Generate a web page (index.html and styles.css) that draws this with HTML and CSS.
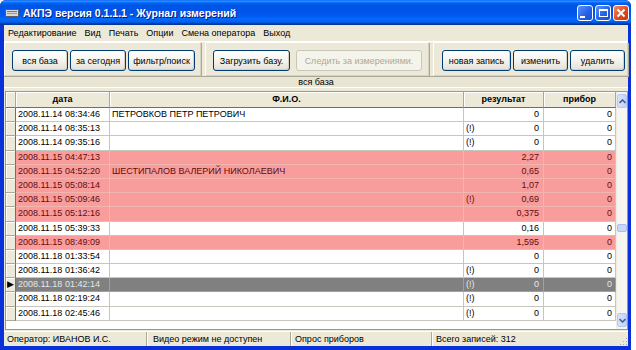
FILE: index.html
```html
<!DOCTYPE html>
<html lang="ru">
<head>
  <meta charset="UTF-8" />
  <title>АКПЭ версия 0.1.1.1 - Журнал измерений</title>
  <link rel="stylesheet" href="styles.css">
</head>
<body>
  <div class="window">
    <div class="titlebar">
      <svg class="app-icon" width="14" height="8" viewBox="0 0 14 8">
        <rect x="0.5" y="0.5" width="13" height="7" rx="1" fill="#d8d8d8" stroke="#5a5a5a"/>
        <rect x="2" y="2" width="10" height="1" fill="#777"/>
        <rect x="2" y="4" width="10" height="1" fill="#999"/>
      </svg>
      <span class="title">АКПЭ версия 0.1.1.1 - Журнал измерений</span>
      <div class="title-btns">
        <div class="tbtn"><span class="min-glyph"></span></div>
        <div class="tbtn"><span class="max-glyph"></span></div>
        <div class="tbtn close">
          <svg width="10" height="10" viewBox="0 0 10 10"><path d="M1.5 1.5 L8.5 8.5 M8.5 1.5 L1.5 8.5" stroke="#fff" stroke-width="2"/></svg>
        </div>
      </div>
    </div>

    <div class="client">
      <div class="menubar">
        <span>Редактирование</span>
        <span>Вид</span>
        <span>Печать</span>
        <span>Опции</span>
        <span>Смена оператора</span>
        <span>Выход</span>
      </div>

      <div class="toolbar">
        <div class="panel p1">
          <button class="btn w56">вся база</button>
          <button class="btn w56">за сегодня</button>
          <button class="btn w67">фильтр/поиск</button>
        </div>
        <div class="panel p2">
          <button class="btn w77">Загрузить базу.</button>
          <button class="btn w126" disabled>Следить за измерениями.</button>
        </div>
        <div class="panel p3">
          <button class="btn w69">новая запись</button>
          <button class="btn w55">изменить</button>
          <button class="btn w55">удалить</button>
        </div>
      </div>

      <div class="strip">вся база</div>

      <div class="grid">
        <div class="grid-body">
          <div class="row head">
            <div class="c ind"></div>
            <div class="c">дата</div>
            <div class="c">Ф.И.О.</div>
            <div class="c">результат</div>
            <div class="c">прибор</div>
          </div>
          <div class="row">
            <div class="c ind"></div>
            <div class="c">2008.11.14 08:34:46</div>
            <div class="c">ПЕТРОВКОВ ПЕТР ПЕТРОВИЧ</div>
            <div class="c res"><span></span><span>0</span></div>
            <div class="c num">0</div>
          </div>
          <div class="row">
            <div class="c ind"></div>
            <div class="c">2008.11.14 08:35:13</div>
            <div class="c"></div>
            <div class="c res"><span>(!)</span><span>0</span></div>
            <div class="c num">0</div>
          </div>
          <div class="row">
            <div class="c ind"></div>
            <div class="c">2008.11.14 09:35:16</div>
            <div class="c"></div>
            <div class="c res"><span>(!)</span><span>0</span></div>
            <div class="c num">0</div>
          </div>
          <div class="row alarm">
            <div class="c ind"></div>
            <div class="c">2008.11.15 04:47:13</div>
            <div class="c"></div>
            <div class="c res"><span></span><span>2,27</span></div>
            <div class="c num">0</div>
          </div>
          <div class="row alarm">
            <div class="c ind"></div>
            <div class="c">2008.11.15 04:52:20</div>
            <div class="c">ШЕСТИПАЛОВ ВАЛЕРИЙ НИКОЛАЕВИЧ</div>
            <div class="c res"><span></span><span>0,65</span></div>
            <div class="c num">0</div>
          </div>
          <div class="row alarm">
            <div class="c ind"></div>
            <div class="c">2008.11.15 05:08:14</div>
            <div class="c"></div>
            <div class="c res"><span></span><span>1,07</span></div>
            <div class="c num">0</div>
          </div>
          <div class="row alarm">
            <div class="c ind"></div>
            <div class="c">2008.11.15 05:09:46</div>
            <div class="c"></div>
            <div class="c res"><span>(!)</span><span>0,69</span></div>
            <div class="c num">0</div>
          </div>
          <div class="row alarm">
            <div class="c ind"></div>
            <div class="c">2008.11.15 05:12:16</div>
            <div class="c"></div>
            <div class="c res"><span></span><span>0,375</span></div>
            <div class="c num">0</div>
          </div>
          <div class="row">
            <div class="c ind"></div>
            <div class="c">2008.11.15 05:39:33</div>
            <div class="c"></div>
            <div class="c res"><span></span><span>0,16</span></div>
            <div class="c num">0</div>
          </div>
          <div class="row alarm">
            <div class="c ind"></div>
            <div class="c">2008.11.15 08:49:09</div>
            <div class="c"></div>
            <div class="c res"><span></span><span>1,595</span></div>
            <div class="c num">0</div>
          </div>
          <div class="row">
            <div class="c ind"></div>
            <div class="c">2008.11.18 01:33:54</div>
            <div class="c"></div>
            <div class="c res"><span></span><span>0</span></div>
            <div class="c num">0</div>
          </div>
          <div class="row">
            <div class="c ind"></div>
            <div class="c">2008.11.18 01:36:42</div>
            <div class="c"></div>
            <div class="c res"><span>(!)</span><span>0</span></div>
            <div class="c num">0</div>
          </div>
          <div class="row selected">
            <div class="c ind">▶</div>
            <div class="c">2008.11.18 01:42:14</div>
            <div class="c"></div>
            <div class="c res"><span>(!)</span><span>0</span></div>
            <div class="c num">0</div>
          </div>
          <div class="row">
            <div class="c ind"></div>
            <div class="c">2008.11.18 02:19:24</div>
            <div class="c"></div>
            <div class="c res"><span>(!)</span><span>0</span></div>
            <div class="c num">0</div>
          </div>
          <div class="row">
            <div class="c ind"></div>
            <div class="c">2008.11.18 02:45:46</div>
            <div class="c"></div>
            <div class="c res"><span>(!)</span><span>0</span></div>
            <div class="c num">0</div>
          </div>
        </div>
        <div class="scrollbar">
          <div class="sbtn">
            <svg width="7" height="5" viewBox="0 0 7 5"><path d="M0.5 4 L3.5 1 L6.5 4" fill="none" stroke="#4d6185" stroke-width="1.6"/></svg>
          </div>
          <div class="track">
            <div class="thumb"></div>
          </div>
          <div class="sbtn">
            <svg width="7" height="5" viewBox="0 0 7 5"><path d="M0.5 1 L3.5 4 L6.5 1" fill="none" stroke="#4d6185" stroke-width="1.6"/></svg>
          </div>
        </div>
      </div>

      <div class="statusbar">
        <div class="sp s1">Оператор: ИВАНОВ И.С.</div>
        <div class="sp s2">Видео режим не доступен</div>
        <div class="sp s3">Опрос приборов</div>
        <div class="sp s4">Всего записей: 312</div>
        <div class="grip">
          <svg width="10" height="10" viewBox="0 0 10 10">
            <rect x="8" y="2" width="1" height="1" fill="#aca899"/>
            <rect x="5" y="5" width="1" height="1" fill="#aca899"/>
            <rect x="8" y="5" width="1" height="1" fill="#aca899"/>
            <rect x="2" y="8" width="1" height="1" fill="#aca899"/>
            <rect x="5" y="8" width="1" height="1" fill="#aca899"/>
            <rect x="8" y="8" width="1" height="1" fill="#aca899"/>
          </svg>
        </div>
      </div>
    </div>
  </div>
</body>
</html>
```

FILE: styles.css
```css
* { box-sizing: border-box; margin: 0; padding: 0; }
body {
  background: #fff;
  font-family: 'Liberation Sans', Arial, sans-serif;
  font-size: 9px;
  color: #000;
}
.window {
  width: 631px;
  height: 350px;
  display: flex;
  flex-direction: column;
  background: #0831d9;
  border-radius: 6px 6px 0 0;
  overflow: hidden;
}
.titlebar {
  height: 25px;
  flex-shrink: 0;
  display: flex;
  align-items: center;
  padding: 0 2px 0 5px;
  background: linear-gradient(#0058ee 0%, #3593ff 4%, #288eff 6%, #127dff 8%, #036ffc 10%, #0262ee 14%, #0057e5 20%, #0054e3 24%, #0055eb 56%, #005bf5 66%, #026afe 76%, #0062ef 86%, #0052d6 92%, #0040ab 94%, #003092 100%);
}
.app-icon { margin-right: 4px; margin-top: 1px; }
.title {
  flex: 1;
  color: #fff;
  font-weight: bold;
  font-size: 10.5px;
  letter-spacing: 0;
  text-shadow: 1px 1px 0 #0a1883;
}
.title-btns { display: flex; gap: 2px; }
.tbtn {
  width: 16px;
  height: 16px;
  border: 1px solid #fff;
  border-radius: 3px;
  background: linear-gradient(135deg, #5f92f7 0%, #2260e6 60%, #1b4fd4 100%);
  display: flex;
  align-items: center;
  justify-content: center;
  position: relative;
}
.tbtn.close { background: linear-gradient(135deg, #f08a68 0%, #e0481c 60%, #c53a13 100%); }
.min-glyph {
  width: 5px;
  height: 2px;
  background: #fff;
  margin: 8px 5px 0 0;
}
.max-glyph {
  width: 9px;
  height: 8px;
  border: 1px solid #fff;
  border-top-width: 2px;
}
.client {
  flex: 1;
  display: flex;
  flex-direction: column;
  background: #ece9d8;
  margin: 0 3px 4px 4px;
}
.menubar {
  height: 16px;
  display: flex;
  align-items: center;
  gap: 8px;
  padding-left: 4px;
}
.toolbar {
  height: 35px;
  display: flex;
  gap: 4px;
  border-top: 1px solid #fff;
}
.panel {
  display: flex;
  gap: 2px;
  padding: 7px 0 0 7px;
  border: 1px solid #d6d2c2;
  border-top-color: #fff;
  border-left-color: #fff;
  box-shadow: 1px 1px 0 #aca899;
}
.p1 { width: 197px; }
.p2 { width: 224px; gap: 6px; }
.p3 { flex: 1; padding-left: 8px; }
.btn {
  height: 21px;
  font-family: inherit;
  font-size: 9px;
  color: #000;
  border: 1px solid #003c74;
  border-radius: 3px;
  background: linear-gradient(#fff 0%, #f4f3ee 50%, #e3e1d6 100%);
  box-shadow: inset -1px -1px 0 #d6d0c5;
}
.btn:disabled {
  color: #aca899;
  border-color: #c9c7ba;
  background: #f5f4ea;
  box-shadow: none;
}
.w55 { width: 55px; }
.w56 { width: 56px; }
.w67 { width: 67px; }
.w69 { width: 69px; }
.w77 { width: 77px; }
.w126 { width: 126px; }
.strip {
  height: 12px;
  line-height: 11px;
  text-align: center;
  border-top: 1px solid #aca899;
  border-bottom: 1px solid #fff;
  background: #e8e5d4;
}
.grid {
  flex: 1;
  display: flex;
  margin: 3px 0 0 1px;
  border: 1px solid #7f9db9;
  background: #fff;
}
.grid-body { flex: 1; }
.row {
  display: grid;
  grid-template-columns: 10px 94px 354px 80px 72px;
  height: 14.2px;
}
.c {
  border-right: 1px solid #c8c6bc;
  border-bottom: 1px solid #c8c6bc;
  padding: 0 2px;
  line-height: 13px;
  white-space: nowrap;
  overflow: hidden;
}
.c.ind {
  background: #ece9d8;
  border-right: 1px solid #716f64;
  border-bottom: 1px solid #aca899;
  box-shadow: inset 1px 1px 0 #fff;
  padding: 0;
  font-size: 9px;
  line-height: 13px;
  text-align: center;
}
.row.head { height: 16px; }
.row.head .c {
  background: #ece9d8;
  font-weight: bold;
  text-align: center;
  line-height: 14px;
  border-right-color: #aca899;
  border-bottom: 1px solid #716f64;
  box-shadow: inset 1px 1px 0 #fff;
}
.res {
  display: flex;
  justify-content: space-between;
  padding-right: 4px;
}
.num { text-align: right; padding-right: 3px; }
.row.alarm .c:not(.ind) {
  background: #f99c9c;
  color: #5e0e0e;
  border-color: #f1b6b0;
}
.row.selected .c:not(.ind) {
  background: #808080;
  color: #e6e6e6;
  border-color: #a0a0a0;
}
.scrollbar {
  width: 11px;
  display: flex;
  flex-direction: column;
  background: #f6f5f0;
  border-left: 1px solid #eeede5;
}
.sbtn {
  height: 14px;
  margin: 2px 0;
  border: 1px solid #b4c8f6;
  border-radius: 2px;
  background: linear-gradient(90deg, #d6e2fc, #c1d3fb);
  display: flex;
  align-items: center;
  justify-content: center;
}
.track { flex: 1; padding-top: 114px; }
.thumb {
  height: 8px;
  border: 1px solid #a9bff4;
  border-radius: 2px;
  background: #c6d6fb;
}
.statusbar {
  height: 15px;
  display: flex;
  align-items: center;
  border-top: 1px solid #fff;
  margin-top: 1px;
}
.sp {
  height: 100%;
  line-height: 14px;
  padding-left: 3px;
  border-right: 1px solid #aca899;
  box-shadow: 1px 0 0 #fff;
}
.s1 { width: 143px; }
.s2 { width: 144px; padding-left: 6px; }
.s3 { width: 141px; padding-left: 4px; }
.s4 { flex: 1; padding-left: 4px; border-right: none; box-shadow: none; }
.grip { width: 10px; height: 10px; align-self: flex-end; }
```
